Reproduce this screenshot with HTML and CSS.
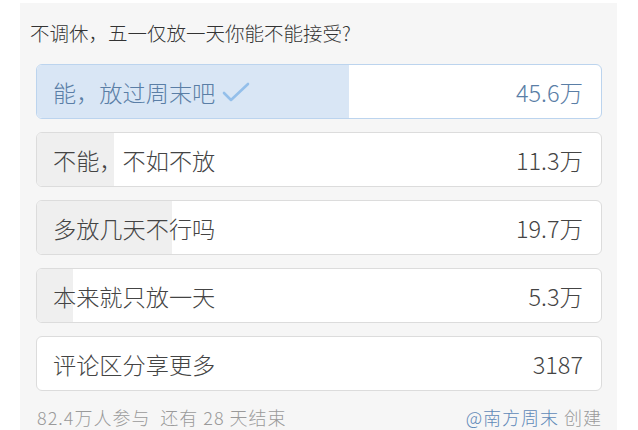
FILE: index.html
```html
<!DOCTYPE html>
<html lang="zh-CN">
<head>
<meta charset="utf-8">
<link rel="stylesheet" href="styles.css">
</head>
<body>
<div class="panel">
  <div class="title">不调休，五一仅放一天你能不能接受?</div>
  <div class="options">
    <div class="option selected">
      <div class="fill" style="width:55.3%"></div>
      <span class="label">能，放过周末吧<svg class="check" width="30" height="22" viewBox="0 0 30 22"><polyline points="3,12 10,19 27,3" fill="none" stroke="#94bfea" stroke-width="2.6" stroke-linecap="round" stroke-linejoin="round"/></svg></span>
      <span class="count">45.6万</span>
    </div>
    <div class="option">
      <div class="fill" style="width:13.7%"></div>
      <span class="label">不能，不如不放</span>
      <span class="count">11.3万</span>
    </div>
    <div class="option">
      <div class="fill" style="width:23.9%"></div>
      <span class="label">多放几天不行吗</span>
      <span class="count">19.7万</span>
    </div>
    <div class="option">
      <div class="fill" style="width:6.4%"></div>
      <span class="label">本来就只放一天</span>
      <span class="count">5.3万</span>
    </div>
    <div class="option">
      <span class="label">评论区分享更多</span>
      <span class="count">3187</span>
    </div>
  </div>
  <div class="footer">
    <span class="stats">82.4万人参与&nbsp;&nbsp;还有 28 天结束</span>
    <span class="creator"><span class="author">@南方周末</span> 创建</span>
  </div>
</div>
</body>
</html>
```
FILE: styles.css
```css
html, body {
  margin: 0;
  padding: 0;
  background: #ffffff;
}
body {
  font-family: "Noto Sans CJK SC", "Noto Sans", sans-serif;
  font-weight: 300;
  width: 638px;
  height: 430px;
  overflow: hidden;
}
.panel {
  margin: 3px 0 0 20px;
  width: 597px;
  height: 427px;
  background: #f6f6f6;
  box-sizing: border-box;
  padding: 15px 15px 0 10px;
}
.title {
  font-size: 19.5px;
  line-height: 30px;
  color: #333;
  margin-bottom: 16px;
}
.options {
  display: flex;
  flex-direction: column;
  gap: 13px;
  margin-left: 6px;
}
.option {
  position: relative;
  height: 55px;
  box-sizing: border-box;
  border: 1px solid #dcdcdc;
  border-radius: 6px;
  background: #fff;
  overflow: hidden;
  display: flex;
  align-items: center;
  justify-content: space-between;
  padding: 0 18px 0 16px;
  color: #444;
}
.fill {
  position: absolute;
  left: 0;
  top: 0;
  bottom: 0;
  background: #efefef;
}
.label, .count {
  position: relative;
  display: flex;
  align-items: center;
}
.label {
  font-size: 23.2px;
}
.count {
  font-size: 23.5px;
}
.option.selected {
  border-color: #bcd4ee;
  color: #5a7ea6;
}
.option.selected .fill {
  background: #d9e6f5;
}
.check {
  margin-left: 6px;
}
.footer {
  margin-top: 14px;
  display: flex;
  justify-content: space-between;
  font-size: 18px;
  line-height: 24px;
  letter-spacing: 1px;
  color: #9a9a9a;
  padding-left: 7px;
  padding-right: 0;
}
.author {
  color: #5f89b8;
}
```
